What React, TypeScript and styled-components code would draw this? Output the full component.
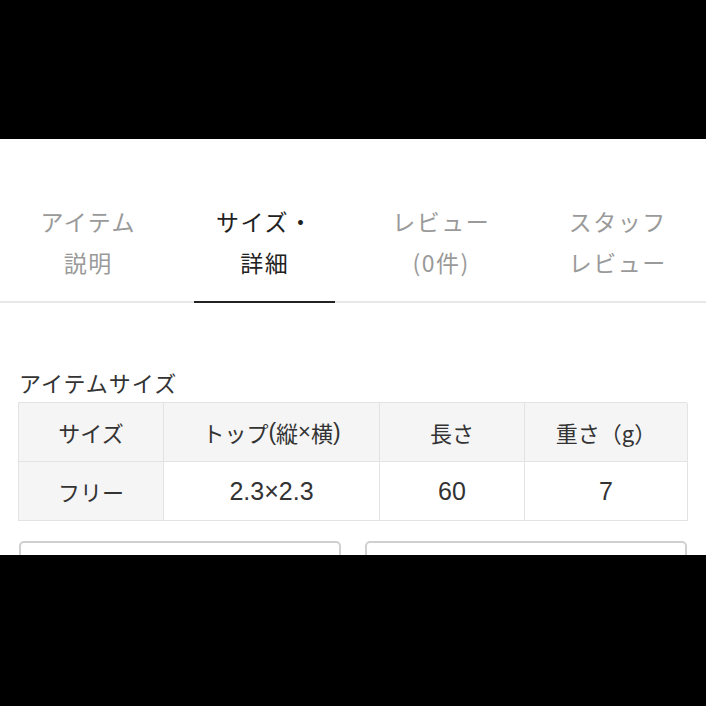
import React from "react";
import styled, { createGlobalStyle } from "styled-components";

const Global = createGlobalStyle`
  html, body { margin: 0; padding: 0; background: #000; }
  body { font-family: "Noto Sans CJK JP", "Noto Sans", sans-serif; }
`;

const Page = styled.div`
  width: 706px;
  height: 706px;
  display: flex;
  flex-direction: column;
  background: #000;
`;

const BlackBand = styled.div<{ $h: number }>`
  height: ${(p) => p.$h}px;
  flex: none;
  background: #000;
`;

const Sheet = styled.div`
  height: 416px;
  flex: none;
  background: #fff;
  overflow: hidden;
  display: flex;
  flex-direction: column;
`;

const TabBar = styled.div`
  display: grid;
  grid-template-columns: repeat(4, 1fr);
  border-bottom: 2px solid #e8e8e8;
`;

const Tab = styled.div<{ $active?: boolean }>`
  position: relative;
  padding: 62px 0 18px;
  text-align: center;
  font-size: 23px;
  line-height: 41px;
  letter-spacing: 1.5px;
  color: ${(p) => (p.$active ? "#222" : "#9a9a9a")};
  &::after {
    content: "";
    display: ${(p) => (p.$active ? "block" : "none")};
    position: absolute;
    left: 10%;
    right: 10%;
    bottom: -2px;
    height: 2px;
    background: #222;
  }
`;

const Heading = styled.div`
  margin: 64px 0 5px 19px;
  font-size: 22px;
  line-height: 30px;
  letter-spacing: 1px;
  color: #333;
`;

const Table = styled.div`
  margin-left: 18px;
  width: 669px;
  display: grid;
  grid-template-columns: 145px 216px 145px 163px;
  border-top: 1px solid #e3e3e3;
  border-left: 1px solid #e3e3e3;
  box-sizing: border-box;
`;

const Cell = styled.div<{ $shaded?: boolean }>`
  height: 59px;
  box-sizing: border-box;
  border-right: 1px solid #e3e3e3;
  border-bottom: 1px solid #e3e3e3;
  background: ${(p) => (p.$shaded ? "#f5f5f5" : "#fff")};
  display: flex;
  align-items: center;
  justify-content: center;
  font-size: 22px;
  color: #333;
`;

const Latin = styled.span<{ $size: number }>`
  font-family: "Liberation Sans", sans-serif;
  font-size: ${(p) => p.$size}px;
`;

const BoxRow = styled.div`
  margin: 20px 0 0 19px;
  width: 668px;
  display: grid;
  grid-template-columns: 1fr 1fr;
  gap: 24px;
`;

const Box = styled.div`
  height: 60px;
  border: 2px solid #d0d0d0;
  border-radius: 5px;
  box-sizing: border-box;
`;

const tabs = [
  ["アイテム", "説明"],
  ["サイズ・", "詳細"],
  ["レビュー", "(0件)"],
  ["スタッフ", "レビュー"],
];

export default function App() {
  return (
    <Page>
      <Global />
      <BlackBand $h={139} />
      <Sheet>
        <TabBar>
          {tabs.map((t, i) => (
            <Tab key={i} $active={i === 1}>
              {t[0]}
              <br />
              {t[1]}
            </Tab>
          ))}
        </TabBar>
        <Heading>アイテムサイズ</Heading>
        <Table>
          <Cell $shaded>サイズ</Cell>
          <Cell $shaded>
            トップ<Latin $size={23}>(</Latin>縦<Latin $size={22}>×</Latin>横
            <Latin $size={23}>)</Latin>
          </Cell>
          <Cell $shaded>長さ</Cell>
          <Cell $shaded>重さ（g）</Cell>
          <Cell $shaded>フリー</Cell>
          <Cell>
            <Latin $size={25}>2.3×2.3</Latin>
          </Cell>
          <Cell>
            <Latin $size={25}>60</Latin>
          </Cell>
          <Cell>
            <Latin $size={25}>7</Latin>
          </Cell>
        </Table>
        <BoxRow>
          <Box />
          <Box />
        </BoxRow>
      </Sheet>
      <BlackBand $h={151} />
    </Page>
  );
}
